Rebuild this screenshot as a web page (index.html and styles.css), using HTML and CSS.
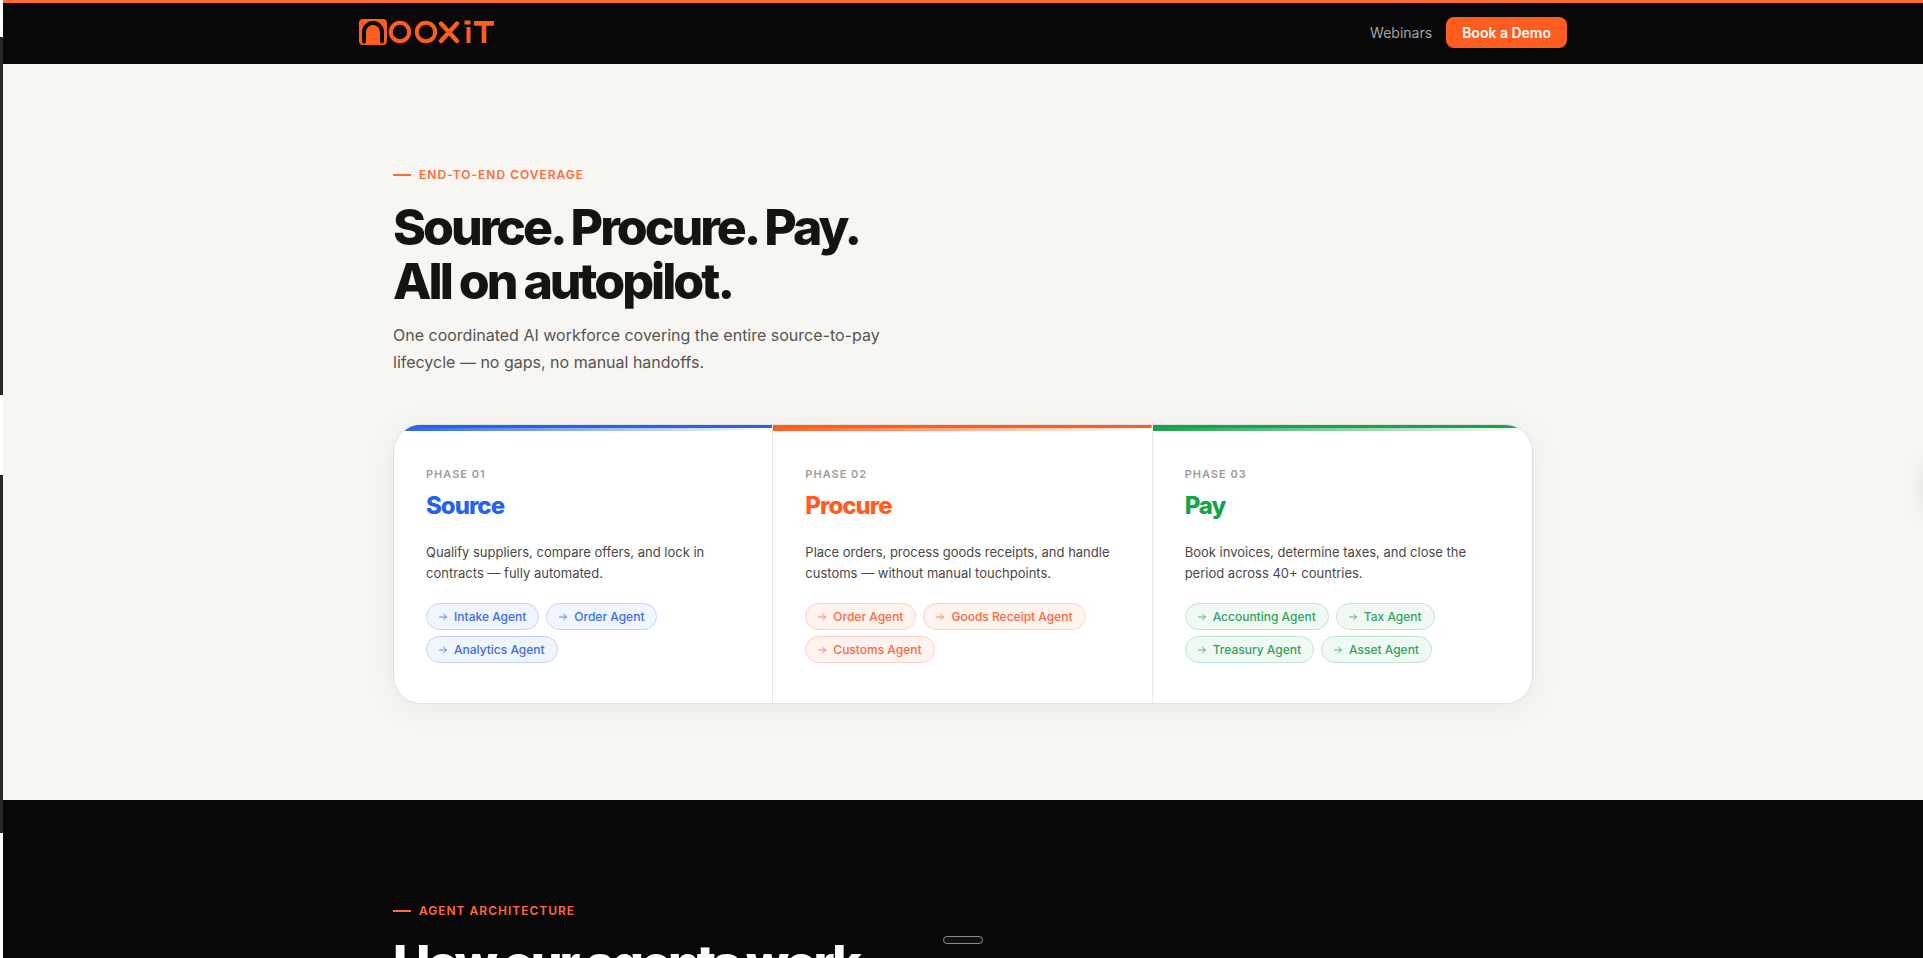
FILE: index.html
```html
<!DOCTYPE html>
<html lang="en">
<head>
<meta charset="utf-8">
<title>Nooxit – Source. Procure. Pay.</title>
<link rel="stylesheet" href="styles.css">
</head>
<body>
<div class="frame">
  <div class="edge" aria-hidden="true">
    <span class="edge-light edge-top"></span>
    <span class="edge-dark edge-panel"></span>
    <span class="edge-light edge-gap"></span>
    <span class="edge-dark edge-panel"></span>
    <span class="edge-light edge-rest"></span>
  </div>
  <div class="page">
    <header class="header">
      <div class="header-inner">
        <a class="logo" href="#" aria-label="Nooxit">
          <svg width="136" height="26" viewBox="0 0 136 26" fill="none" stroke="#ff5c1f">
            <rect x="0" y="0" width="28" height="26" rx="4" fill="#ff5c1f" stroke="none"/>
            <path d="M5 22.500V13a9 9 0 0 1 18 0v9.500" stroke="#080808" stroke-width="4" stroke-linecap="round"/>
            <circle cx="41" cy="13" r="9.200" stroke-width="4"/>
            <circle cx="67" cy="13" r="9.200" stroke-width="4"/>
            <path d="M82 4.500l16 17.500M98 4.500L82 22" stroke-width="4.400" stroke-linecap="round"/>
            <path d="M105.500 3.600h6M109.500 8v16" stroke-width="4"/>
            <path d="M115 4.400h20M125 4v20" stroke-width="4.600"/>
          </svg>
        </a>
        <nav class="nav">
          <a class="nav-link" href="#">Webinars</a>
          <a class="nav-cta" href="#">Book a Demo</a>
        </nav>
      </div>
    </header>
    <main>
      <section class="section coverage">
        <div class="container">
          <p class="eyebrow">End-to-end coverage</p>
          <h2 class="headline">Source. Procure. Pay.<br>All on autopilot.</h2>
          <p class="lead">One coordinated AI workforce covering the entire source-to-pay lifecycle — no gaps, no manual handoffs.</p>
          <div class="phases">
            <article class="phase phase-source">
              <p class="phase-label">Phase 01</p>
              <h3 class="phase-title">Source</h3>
              <p class="phase-text">Qualify suppliers, compare offers, and lock in contracts — fully automated.</p>
              <ul class="agents">
                <li class="agent"><svg class="arrow" viewBox="0 0 8 8"><path d="M.5 4h7M4.500 1.200L7.500 4l-3 2.800"/></svg>Intake Agent</li>
                <li class="agent"><svg class="arrow" viewBox="0 0 8 8"><path d="M.5 4h7M4.500 1.200L7.500 4l-3 2.800"/></svg>Order Agent</li>
                <li class="agent"><svg class="arrow" viewBox="0 0 8 8"><path d="M.5 4h7M4.500 1.200L7.500 4l-3 2.800"/></svg>Analytics Agent</li>
              </ul>
            </article>
            <article class="phase phase-procure">
              <p class="phase-label">Phase 02</p>
              <h3 class="phase-title">Procure</h3>
              <p class="phase-text">Place orders, process goods receipts, and handle customs — without manual touchpoints.</p>
              <ul class="agents">
                <li class="agent"><svg class="arrow" viewBox="0 0 8 8"><path d="M.5 4h7M4.500 1.200L7.500 4l-3 2.800"/></svg>Order Agent</li>
                <li class="agent"><svg class="arrow" viewBox="0 0 8 8"><path d="M.5 4h7M4.500 1.200L7.500 4l-3 2.800"/></svg>Goods Receipt Agent</li>
                <li class="agent"><svg class="arrow" viewBox="0 0 8 8"><path d="M.5 4h7M4.500 1.200L7.500 4l-3 2.800"/></svg>Customs Agent</li>
              </ul>
            </article>
            <article class="phase phase-pay">
              <p class="phase-label">Phase 03</p>
              <h3 class="phase-title">Pay</h3>
              <p class="phase-text">Book invoices, determine taxes, and close the period across 40+ countries.</p>
              <ul class="agents">
                <li class="agent"><svg class="arrow" viewBox="0 0 8 8"><path d="M.5 4h7M4.500 1.200L7.500 4l-3 2.800"/></svg>Accounting Agent</li>
                <li class="agent"><svg class="arrow" viewBox="0 0 8 8"><path d="M.5 4h7M4.500 1.200L7.500 4l-3 2.800"/></svg>Tax Agent</li>
                <li class="agent"><svg class="arrow" viewBox="0 0 8 8"><path d="M.5 4h7M4.500 1.200L7.500 4l-3 2.800"/></svg>Treasury Agent</li>
                <li class="agent"><svg class="arrow" viewBox="0 0 8 8"><path d="M.5 4h7M4.500 1.200L7.500 4l-3 2.800"/></svg>Asset Agent</li>
              </ul>
            </article>
          </div>
        </div>
      </section>
      <section class="section architecture">
        <div class="container">
          <p class="eyebrow">Agent architecture</p>
          <h2 class="headline">How our agents work</h2>
        </div>
      </section>
    </main>
  </div>
</div>
<span class="handle" aria-hidden="true"></span>
<span class="side-tab" aria-hidden="true"></span>
</body>
</html>
```
FILE: styles.css
```css
:root {
  --orange: #ff5c1f;
  --ink: #16140f;
  --black: #080808;
  --cream: #f7f6f2;
}

* { box-sizing: border-box; }

body {
  margin: 0;
  font-family: Inter, "Liberation Sans", sans-serif;
  color: var(--ink);
  overflow: hidden;
}

h2, h3, p, ul { margin: 0; padding: 0; }

.frame {
  display: flex;
  height: 100vh;
  overflow: hidden;
}

/* Sliver of the window behind the page */
.edge {
  display: flex;
  flex-direction: column;
  flex: 0 0 3px;
}
.edge-light { background: #fff; }
.edge-dark { background: #29272a; }
.edge-top { height: 37px; }
.edge-panel { height: 358px; }
.edge-gap { height: 80px; }
.edge-rest { flex: 1; }

.page {
  flex: 1;
  min-width: 0;
  background: var(--black);
}

.header {
  border-top: 3px solid #ff6a35;
  background: var(--black);
}
.header-inner {
  display: flex;
  align-items: center;
  justify-content: space-between;
  max-width: 1208px;
  height: 61px;
  margin: 0 auto;
  padding-bottom: 3px;
}
.logo, .logo svg { display: block; }
.nav {
  display: flex;
  align-items: center;
  gap: 14px;
}
.nav-link {
  font-size: 14px;
  color: #a3a3a3;
  text-decoration: none;
}
.nav-cta {
  padding: 0 16px;
  border-radius: 8px;
  background: var(--orange);
  color: #fff;
  font-size: 14px;
  font-weight: 600;
  line-height: 31px;
  text-decoration: none;
}

.section { padding: 100px 24px 96px; }
.container {
  max-width: 1140px;
  margin: 0 auto;
}
.coverage { background: var(--cream); }
.architecture { color: #fff; }

.eyebrow {
  display: flex;
  align-items: center;
  gap: 8px;
  margin-bottom: 15px;
  color: #ff6b3d;
  font-size: 12px;
  font-weight: 600;
  line-height: 21px;
  letter-spacing: 1px;
  text-transform: uppercase;
}
.eyebrow::before {
  content: "";
  width: 18px;
  height: 2px;
  background: currentColor;
}

.headline {
  font-size: 50px;
  font-weight: 800;
  line-height: 54px;
  letter-spacing: -3px;
}
.lead {
  max-width: 520px;
  margin-top: 14px;
  color: #57534e;
  font-size: 16px;
  line-height: 27px;
}

.phases {
  display: grid;
  grid-template-columns: repeat(3, 1fr);
  margin-top: 48px;
  overflow: hidden;
  border: 1px solid #e3e1db;
  border-radius: 28px;
  background: #fff;
  box-shadow: 0 4px 32px rgba(0, 0, 0, 0.06);
}
.phase {
  padding: 40px 32px;
  border-right: 1px solid #e9e8e6;
  background:
    linear-gradient(var(--accent), var(--accent)) top / 100% 3px no-repeat,
    linear-gradient(90deg, var(--accent), #fff) top / 100% 6px no-repeat;
}
.phase:last-child { border-right: 0; }
.phase-source { --accent: #2563eb; --chip: #3a6ee8; --tint: #eff4fd; --line: #bfd3fb; }
.phase-procure { --accent: #ff5c1f; --chip: #f76a42; --tint: #fff2ef; --line: #ffd0c2; }
.phase-pay { --accent: #16a34a; --chip: #33a35c; --tint: #f0f8f3; --line: #bfe5cc; }

.phase-label {
  color: #a09c97;
  font-size: 11px;
  font-weight: 600;
  line-height: 18px;
  letter-spacing: 1px;
  text-transform: uppercase;
}
.phase-title {
  margin-top: 9px;
  color: var(--accent);
  font-size: 24px;
  font-weight: 800;
  line-height: 28px;
  letter-spacing: -1px;
}
.phase-text {
  margin-top: 22px;
  color: #4b4845;
  font-size: 13px;
  line-height: 21px;
}
.agents {
  display: flex;
  flex-wrap: wrap;
  gap: 6px 7px;
  margin-top: 19px;
  list-style: none;
}
.agent {
  display: flex;
  align-items: center;
  gap: 7px;
  padding: 0 12px;
  border: 1px solid var(--line);
  border-radius: 14px;
  background: var(--tint);
  color: var(--chip);
  font-size: 12px;
  font-weight: 500;
  line-height: 25px;
}
.arrow {
  width: 8px;
  height: 8px;
  fill: none;
  stroke: currentColor;
  stroke-linecap: round;
  stroke-linejoin: round;
  opacity: 0.8;
}

.handle {
  position: fixed;
  bottom: 14px;
  left: 50%;
  width: 40px;
  height: 8px;
  margin-left: -19px;
  border: 1px solid #8a8a8a;
  border-radius: 4px;
  background: #111;
}
.side-tab {
  position: fixed;
  top: 464px;
  right: -42px;
  width: 40px;
  height: 48px;
  box-shadow: 0 0 24px rgba(0, 0, 0, 0.1);
}
```
